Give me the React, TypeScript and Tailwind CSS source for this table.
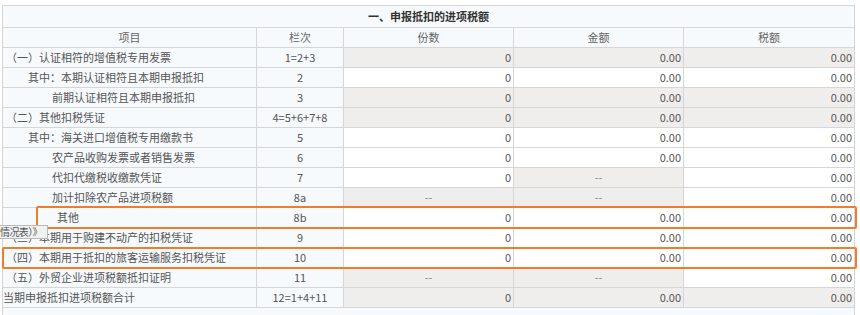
import React from 'react';

type Cell = { v: string; g?: boolean; dash?: boolean };

type Row = { item: string; indent: string; code: string; cells: Cell[] };

const W = (v: string): Cell => ({ v });
const G = (v: string): Cell => ({ v, g: true });
const D: Cell = { v: '--', g: true, dash: true };

const rows: Row[] = [
  { item: '（一）认证相符的增值税专用发票', indent: 'pl-[3px]', code: '1=2+3', cells: [G('0'), G('0.00'), G('0.00')] },
  { item: '其中：本期认证相符且本期申报抵扣', indent: 'pl-[25px]', code: '2', cells: [W('0'), W('0.00'), W('0.00')] },
  { item: '前期认证相符且本期申报抵扣', indent: 'pl-[49px]', code: '3', cells: [G('0'), G('0.00'), G('0.00')] },
  { item: '（二）其他扣税凭证', indent: 'pl-[3px]', code: '4=5+6+7+8', cells: [G('0'), G('0.00'), G('0.00')] },
  { item: '其中：海关进口增值税专用缴款书', indent: 'pl-[25px]', code: '5', cells: [W('0'), W('0.00'), W('0.00')] },
  { item: '农产品收购发票或者销售发票', indent: 'pl-[49px]', code: '6', cells: [W('0'), W('0.00'), W('0.00')] },
  { item: '代扣代缴税收缴款凭证', indent: 'pl-[49px]', code: '7', cells: [W('0'), D, W('0.00')] },
  { item: '加计扣除农产品进项税额', indent: 'pl-[49px]', code: '8a', cells: [D, D, W('0.00')] },
  { item: '其他', indent: 'pl-[54px]', code: '8b', cells: [W('0'), W('0.00'), W('0.00')] },
  { item: '（三）本期用于购建不动产的扣税凭证', indent: 'pl-[3px]', code: '9', cells: [W('0'), W('0.00'), W('0.00')] },
  { item: '（四）本期用于抵扣的旅客运输服务扣税凭证', indent: 'pl-[3px]', code: '10', cells: [W('0'), W('0.00'), W('0.00')] },
  { item: '（五）外贸企业进项税额抵扣证明', indent: 'pl-[3px]', code: '11', cells: [D, D, W('0.00')] },
  { item: '当期申报抵扣进项税额合计', indent: 'pl-0', code: '12=1+4+11', cells: [G('0'), G('0.00'), G('0.00')] },
];

export default function App() {
  return (
    <div
      className="relative w-[860px] h-[315px] overflow-hidden bg-white pt-[5px] pl-[2px] text-[11px] text-[#555]"
      style={{ fontFamily: '"Noto Sans CJK SC", "Noto Sans", sans-serif' }}
    >
      <table className="table-fixed border-collapse w-[852px] border border-[#d6d6d6]">
        <colgroup>
          <col className="w-[254px]" />
          <col className="w-[87px]" />
          <col className="w-[170px]" />
          <col className="w-[170px]" />
          <col className="w-[171px]" />
        </colgroup>
        <tbody>
          <tr className="h-[22px] bg-[#f6fafd]">
            <td colSpan={5} className="border border-[#d6d6d6] text-center font-bold text-[#333] leading-none">
              一、申报抵扣的进项税额
            </td>
          </tr>
          <tr className="h-[20px] bg-[#f6fafd] text-[#666]">
            <td className="border border-[#d6d6d6] text-center leading-none">项目</td>
            <td className="border border-[#d6d6d6] text-center leading-none">栏次</td>
            <td className="border border-[#d6d6d6] text-center leading-none">份数</td>
            <td className="border border-[#d6d6d6] text-center leading-none">金额</td>
            <td className="border border-[#d6d6d6] text-center leading-none">税额</td>
          </tr>
          {rows.map((r, i) => (
            <tr key={i} className="h-[20px]">
              <td className={`border border-[#d6d6d6] bg-[#f6fafd] whitespace-nowrap leading-none ${r.indent}`}>{r.item}</td>
              <td className="border border-[#d6d6d6] bg-[#f6fafd] text-center leading-none">{r.code}</td>
              {r.cells.map((c, j) => (
                <td
                  key={j}
                  className={`border border-[#d6d6d6] leading-none ${c.g ? 'bg-[#f0eded]' : 'bg-white'} ${
                    c.dash ? 'text-center text-[#888]' : 'text-right pr-[2px]'
                  }`}
                >
                  {c.v}
                </td>
              ))}
            </tr>
          ))}
          <tr className="h-[10px] bg-[#f6fafd]">
            <td colSpan={5} className="border-x border-[#d6d6d6]" />
          </tr>
        </tbody>
      </table>

      {/* highlight boxes */}
      <div className="absolute left-[36px] top-[206px] w-[821px] h-[23px] border-2 border-[#ef7d2d] rounded-[2px]" />
      <div className="absolute left-[2px] top-[247px] w-[855px] h-[22px] border-2 border-[#ef7d2d] rounded-[2px]" />

      {/* tooltip fragment */}
      <div className="absolute left-0 top-[225px] w-[48px] h-[14px] bg-[#f1f1f1] border border-[#b9b9b9] border-l-0 flex items-center text-[10px] tracking-[-0.6px] text-[#555] leading-none whitespace-nowrap">
        情况表）》
      </div>
    </div>
  );
}
